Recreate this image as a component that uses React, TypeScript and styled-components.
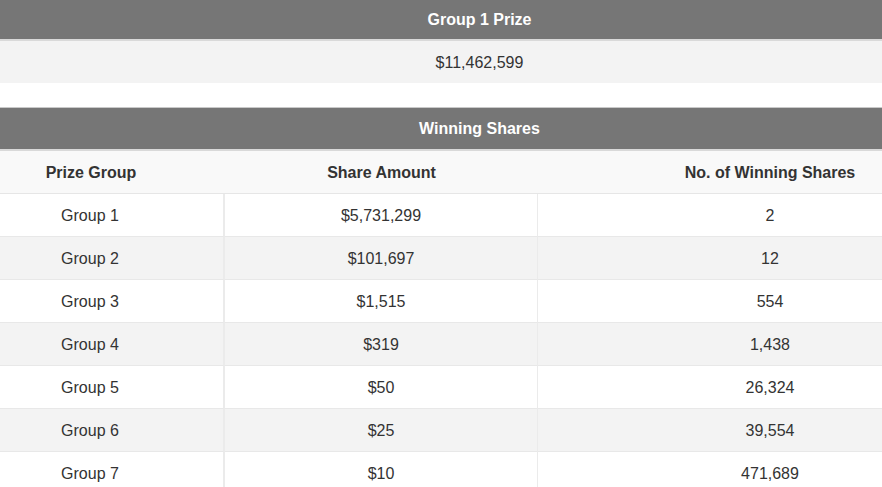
import React from "react";
import styled, { createGlobalStyle } from "styled-components";

const Global = createGlobalStyle`
  html, body { margin: 0; padding: 0; background: #ffffff; }
  body { font-family: "Liberation Sans", Arial, Helvetica, sans-serif; color: #333333; overflow: hidden; }
`;

const Viewport = styled.div`
  width: 882px;
  height: 487px;
  overflow: hidden;
`;

const Sheet = styled.div`
  width: 1045px;
  margin-left: -43px;
  display: flex;
  flex-direction: column;
`;

const Section = styled.section<{ $gap?: number }>`
  display: flex;
  flex-direction: column;
  margin-top: ${(p) => p.$gap ?? 0}px;
`;

const Bar = styled.div<{ $top?: boolean }>`
  box-sizing: border-box;
  height: ${(p) => (p.$top ? 44 : 41)}px;
  padding-top: 1px;
  background: #767676;
  color: #ffffff;
  font-weight: 700;
  font-size: 16px;
  display: flex;
  align-items: center;
  justify-content: center;
  border-top: ${(p) => (p.$top ? "1px solid #c9c9c9" : "none")};
  border-bottom: 2px solid #d9d9d9;
`;

const PrizeRow = styled.div`
  box-sizing: border-box;
  height: 42px;
  padding-top: 2px;
  background: #f3f3f3;
  display: flex;
  align-items: center;
  justify-content: center;
  font-size: 16px;
`;

const Grid = styled.div`
  display: grid;
  grid-template-columns: 268px 313px 1fr;
`;

const HeadCell = styled.div`
  box-sizing: border-box;
  height: 43px;
  padding-top: 2px;
  background: #f9f9f9;
  border-bottom: 1px solid #e6e6e6;
  display: flex;
  align-items: center;
  justify-content: center;
  font-weight: 700;
  font-size: 16px;
  color: #333333;
`;

const Cell = styled.div<{ $alt: boolean; $divider: number }>`
  box-sizing: border-box;
  height: 43px;
  padding-top: 2px;
  background: ${(p) => (p.$alt ? "#f3f3f3" : "#ffffff")};
  border-bottom: 1px solid #e8e8e8;
  border-right: ${(p) => (p.$divider ? `${p.$divider}px solid #ebebeb` : "none")};
  display: flex;
  align-items: center;
  justify-content: center;
  font-size: 16px;
  color: #333333;
`;

const rows: [string, string, string][] = [
  ["Group 1", "$5,731,299", "2"],
  ["Group 2", "$101,697", "12"],
  ["Group 3", "$1,515", "554"],
  ["Group 4", "$319", "1,438"],
  ["Group 5", "$50", "26,324"],
  ["Group 6", "$25", "39,554"],
  ["Group 7", "$10", "471,689"],
];

export default function App() {
  return (
    <Viewport>
      <Global />
      <Sheet>
        <Section>
          <Bar>Group 1 Prize</Bar>
          <PrizeRow>$11,462,599</PrizeRow>
        </Section>
        <Section $gap={24}>
          <Bar $top>Winning Shares</Bar>
          <Grid>
            <HeadCell>Prize Group</HeadCell>
            <HeadCell>Share Amount</HeadCell>
            <HeadCell>No. of Winning Shares</HeadCell>
            {rows.map((r, i) =>
              r.map((v, j) => (
                <Cell key={`${i}-${j}`} $alt={i % 2 === 1} $divider={j === 0 ? 2 : j === 1 ? 1 : 0}>
                  {v}
                </Cell>
              ))
            )}
          </Grid>
        </Section>
      </Sheet>
    </Viewport>
  );
}
